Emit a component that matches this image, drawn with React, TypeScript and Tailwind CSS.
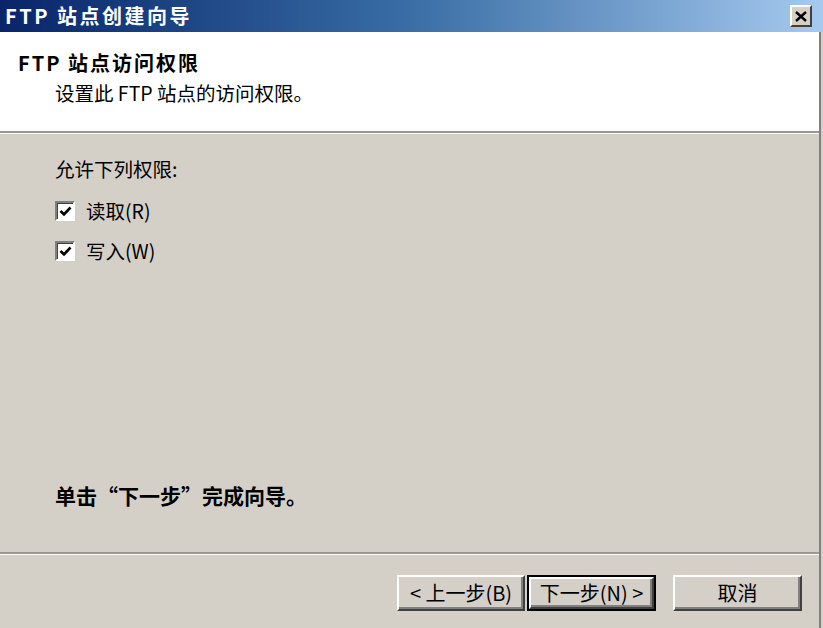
import React from "react";

const font = { fontFamily: '"Noto Sans CJK SC", "Noto Sans", sans-serif' };

const Check = () => (
  <span className="flex h-[20px] w-[20px] items-center justify-center border-2 border-t-[#808080] border-l-[#808080] border-r-white border-b-white bg-white shadow-[inset_1px_1px_#404040]">
    <svg width="13" height="11" viewBox="0 0 13 11">
      <polyline points="1.5,5 5,8.5 11.5,1.5" fill="none" stroke="#000" strokeWidth="2.6" />
    </svg>
  </span>
);

const Button: React.FC<{ label: string; isDefault?: boolean; className?: string }> = ({
  label,
  isDefault,
  className,
}) => (
  <div
    className={
      "h-[36px] " +
      (isDefault ? "border-2 border-black " : "") +
      (className ?? "")
    }
  >
    <div className="flex h-full w-full items-center justify-center border-2 border-t-white border-l-white border-r-[#404040] border-b-[#404040] bg-[#d4d0c8] text-[20px] leading-none text-black shadow-[inset_-2px_-2px_#808080]">
      {label}
    </div>
  </div>
);

export default function App() {
  return (
    <div className="flex h-[628px] w-[823px] flex-col overflow-hidden bg-[#d4d0c8]" style={font}>
      {/* title bar */}
      <div className="flex h-[32px] shrink-0 items-center bg-gradient-to-r from-[#0a246a] via-[#3a6ea5] to-[#a6caf0] pl-[5px] pr-[11px]">
        <span className="text-[20px] font-bold leading-none tracking-[2.5px] text-white">
          FTP 站点创建向导
        </span>
        <div className="ml-auto flex h-[22px] w-[22px] items-center justify-center border-2 border-t-white border-l-white border-r-[#404040] border-b-[#404040] bg-[#d4d0c8]">
          <svg width="12" height="11" viewBox="0 0 12 11">
            <path d="M1 1 L11 10 M11 1 L1 10" stroke="#000" strokeWidth="2.4" />
          </svg>
        </div>
      </div>

      <div className="flex flex-1">
        <div className="flex w-[819px] flex-col">
          {/* header */}
          <div className="h-[99px] shrink-0 bg-white pl-[18px] pt-[21px]">
            <div className="text-[20px] font-bold leading-[20px] tracking-[2px] text-black">
              FTP 站点访问权限
            </div>
            <div className="mt-[10px] pl-[37px] text-[19.5px] leading-[20px] text-black">
              设置此 FTP 站点的访问权限。
            </div>
          </div>
          <div className="h-[3px] shrink-0 border-t-2 border-b border-t-[#9a9890] border-b-white" />

          {/* body */}
          <div className="flex h-[418px] flex-col pl-[55px] pt-[25px]">
            <div className="text-[19.5px] leading-[20px] text-black">允许下列权限:</div>
            <div className="mt-[22px] flex items-center gap-[11px]">
              <Check />
              <span className="text-[19.5px] leading-[20px] text-black">读取(R)</span>
            </div>
            <div className="mt-[20px] flex items-center gap-[11px]">
              <Check />
              <span className="text-[19.5px] leading-[20px] text-black">写入(W)</span>
            </div>
            <div className="mt-auto pb-[46px] text-[21px] font-bold leading-[22px] text-black">
              单击“下一步”完成向导。
            </div>
          </div>
          <div className="h-[3px] shrink-0 border-t-2 border-b border-t-[#9a9890] border-b-white" />

          {/* buttons */}
          <div className="flex pl-[397px] pt-[20px]">
            <Button label="< 上一步(B)" className="w-[128px]" />
            <Button label="下一步(N) >" isDefault className="ml-[2px] w-[129px]" />
            <Button label="取消" className="ml-[17px] w-[129px]" />
          </div>
        </div>
        <div className="w-[2px] bg-[#808080]" />
        <div className="w-[2px] bg-[#d4d0c8]" />
      </div>
    </div>
  );
}
